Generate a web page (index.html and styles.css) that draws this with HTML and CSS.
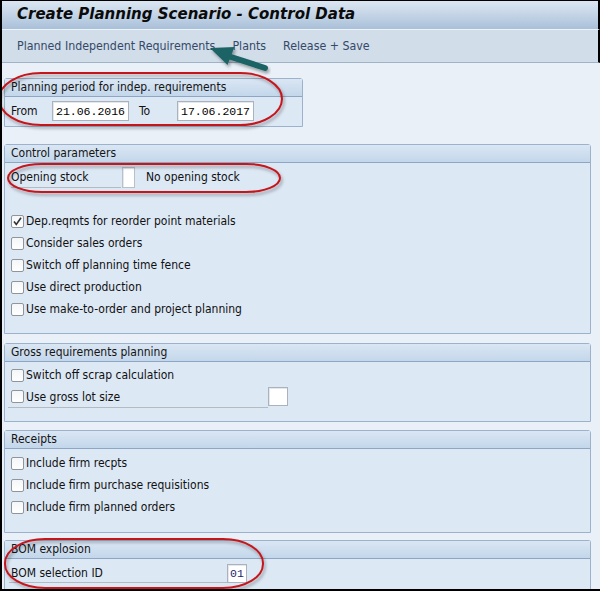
FILE: index.html
```html
<!DOCTYPE html>
<html>
<head>
<meta charset="utf-8">
<link rel="stylesheet" href="styles.css">
</head>
<body>
<div class="frame">
  <div class="titlebar"><h1 class="title">Create Planning Scenario - Control Data</h1></div>
  <div class="toolbar">
    <span class="tb-item">Planned Independent Requirements</span>
    <span class="tb-item">Plants</span>
    <span class="tb-item">Release + Save</span>
  </div>
  <div class="content">
    <section class="group g1">
      <div class="ghead">Planning period for indep. requirements</div>
      <div class="gbody">
        <div class="row period">
          <span class="lbl lbl-from">From</span>
          <span class="input date">21.06.2016</span>
          <span class="lbl lbl-to">To</span>
          <span class="input date">17.06.2017</span>
        </div>
      </div>
    </section>

    <section class="group g2">
      <div class="ghead">Control parameters</div>
      <div class="gbody">
        <div class="row">
          <span class="lbl uline lbl-open">Opening stock</span>
          <span class="input tiny"></span>
          <span class="desc">No opening stock</span>
        </div>
        <div class="row"></div>
        <div class="row"><span class="cb checked"><svg viewBox="0 0 13 13" width="13" height="13"><path d="M3 6.5 L5.3 9.5 L10 2.8" fill="none" stroke="#333" stroke-width="1.6"/></svg></span><span class="cbl">Dep.reqmts for reorder point materials</span></div>
        <div class="row"><span class="cb"></span><span class="cbl">Consider sales orders</span></div>
        <div class="row"><span class="cb"></span><span class="cbl">Switch off planning time fence</span></div>
        <div class="row"><span class="cb"></span><span class="cbl">Use direct production</span></div>
        <div class="row"><span class="cb"></span><span class="cbl">Use make-to-order and project planning</span></div>
      </div>
    </section>

    <section class="group g3">
      <div class="ghead">Gross requirements planning</div>
      <div class="gbody">
        <div class="row"><span class="cb"></span><span class="cbl">Switch off scrap calculation</span></div>
        <div class="row">
          <span class="uline lot"><span class="cb"></span><span class="cbl">Use gross lot size</span></span>
          <span class="input small"></span>
        </div>
      </div>
    </section>

    <section class="group g4">
      <div class="ghead">Receipts</div>
      <div class="gbody">
        <div class="row"><span class="cb"></span><span class="cbl">Include firm recpts</span></div>
        <div class="row"><span class="cb"></span><span class="cbl">Include firm purchase requisitions</span></div>
        <div class="row"><span class="cb"></span><span class="cbl">Include firm planned orders</span></div>
      </div>
    </section>

    <section class="group g5">
      <div class="ghead">BOM explosion</div>
      <div class="gbody">
        <div class="row">
          <span class="lbl uline lbl-bom">BOM selection ID</span>
          <span class="input bomid">01</span>
        </div>
      </div>
    </section>
  </div>

  <svg class="annot" width="600" height="601" viewBox="0 0 600 601">
    <defs>
      <filter id="sh" x="-10%" y="-30%" width="120%" height="160%">
        <feDropShadow dx="1.5" dy="2.5" stdDeviation="1.5" flood-color="#000" flood-opacity="0.35"/>
      </filter>
    </defs>
    <g fill="none" stroke="#c5161d" stroke-width="2" filter="url(#sh)">
      <rect x="-1" y="73" width="283" height="52" rx="42" ry="26"/>
      <rect x="8" y="164" width="272" height="28" rx="34" ry="14"/>
      <rect x="5" y="539" width="258" height="49" rx="40" ry="24"/>
    </g>
    <g fill="#1f6466" filter="url(#sh)">
      <path d="M229.5 56.5 L265 68" stroke="#1f6466" stroke-width="6" stroke-linecap="round"/>
      <polygon points="210,48 234.5,47 227.5,65"/>
    </g>
  </svg>
</div>
</body>
</html>
```

FILE: styles.css
```css
* { box-sizing: border-box; }
html, body { margin: 0; padding: 0; background: #ffffff; }
body {
  font-family: "DejaVu Sans Condensed", "DejaVu Sans", sans-serif;
  font-size: 12px;
  color: #111;
}
.frame {
  position: relative;
  width: 600px;
  height: 591px;
  border-left: 2px solid #000;
  border-top: 1px solid #000;
  border-bottom: 2px solid #000;
  overflow: hidden;
  display: flex;
  flex-direction: column;
  background: #e9f0f7;
}
.titlebar {
  height: 29px;
  border-right: 2px solid #000;
  border-bottom: 1px solid #eef3f8;
  background: linear-gradient(#dbe6f1 0%, #c6d6e7 45%, #a9c0d9 100%);
  display: flex;
  align-items: center;
  padding-left: 15px;
  padding-bottom: 4px;
}
.title {
  margin: 0;
  font-family: "DejaVu Sans Condensed", "DejaVu Sans", sans-serif;
  font-weight: bold;
  font-style: italic;
  font-size: 16.7px;
  color: #0b0b0b;
}
.toolbar {
  height: 33px;
  border-right: 2px solid #000;
  border-bottom: 1px solid #9fb2c6;
  background: #d1dde8;
  display: flex;
  align-items: center;
  gap: 17px;
  padding-left: 15px;
  color: #34496a;
  font-size: 12.3px;
}
.content {
  flex: 1;
  padding: 15px 0 0 2px;
  display: flex;
  flex-direction: column;
}
.group {
  border: 1px solid #9cb2cc;
  border-radius: 3px 3px 0 0;
  background: #dde8f5;
  display: flex;
  flex-direction: column;
}
.ghead {
  height: 18px;
  border-bottom: 1px solid #8ea6c3;
  background: linear-gradient(#dae6f3, #c3d7eb);
  padding-left: 6px;
  padding-bottom: 2px;
  display: flex;
  align-items: center;
  color: #151515;
}
.g1 { width: 299px; height: 49px; }
.g2 { width: 587px; height: 190px; margin-top: 17px; }
.g3 { width: 587px; height: 79px; margin-top: 9px; }
.g4 { width: 587px; height: 103px; margin-top: 8px; }
.g5 { width: 587px; flex: 1; margin-top: 7px; border-bottom: none; }
.g1 .gbody { padding-top: 2px; }
.g2 .gbody { padding-top: 3px; }
.g3 .gbody { padding-top: 2px; }
.g4 .gbody { padding-top: 3px; }
.g5 .gbody { padding-top: 3px; }

.row {
  height: 22px;
  display: flex;
  align-items: center;
  padding-left: 6px;
}
.period { height: 24px; padding-left: 6px; }
.lbl { display: flex; align-items: center; height: 20px; }
.lbl-from { width: 41px; }
.lbl-to { width: 38px; margin-left: 10px; }
.input {
  display: flex;
  align-items: center;
  background: #fff;
  border: 1px solid #aab3bd;
  box-shadow: inset 1px 1px 0 #e4e8ec;
  height: 20px;
}
.date {
  width: 77px;
  padding-left: 3px;
  font-family: "Liberation Mono", monospace;
  font-size: 11.5px;
  color: #000;
}
.uline { border-bottom: 1px solid #b3bac2; }
.lbl-open { width: 110px; height: 21px; }
.tiny { width: 13px; height: 21px; margin-left: 1px; border-color: #b8c0c8; }
.desc { margin-left: 11px; }
.cb {
  width: 13px;
  height: 13px;
  border: 1px solid #8f959b;
  border-radius: 2px;
  background: linear-gradient(#f4f6f8, #ffffff);
  display: inline-block;
  flex: none;
}
.cb svg { display: block; margin: -1px 0 0 -1px; }
.cbl { margin-left: 2px; }
.lot {
  width: 260px;
  height: 21px;
  display: flex;
  align-items: center;
  margin-left: -3px;
  padding-left: 3px;
}
.small { width: 20px; height: 19px; margin-top: -1px; }
.lbl-bom { width: 218px; height: 20px; margin-left: -2px; padding-left: 2px; }
.bomid {
  width: 20px;
  height: 19px;
  padding-left: 2px;
  font-family: "Liberation Mono", monospace;
  font-size: 11.5px;
  color: #1a1f6e;
}
.annot {
  position: absolute;
  left: -2px;
  top: -1px;
  pointer-events: none;
}
```
